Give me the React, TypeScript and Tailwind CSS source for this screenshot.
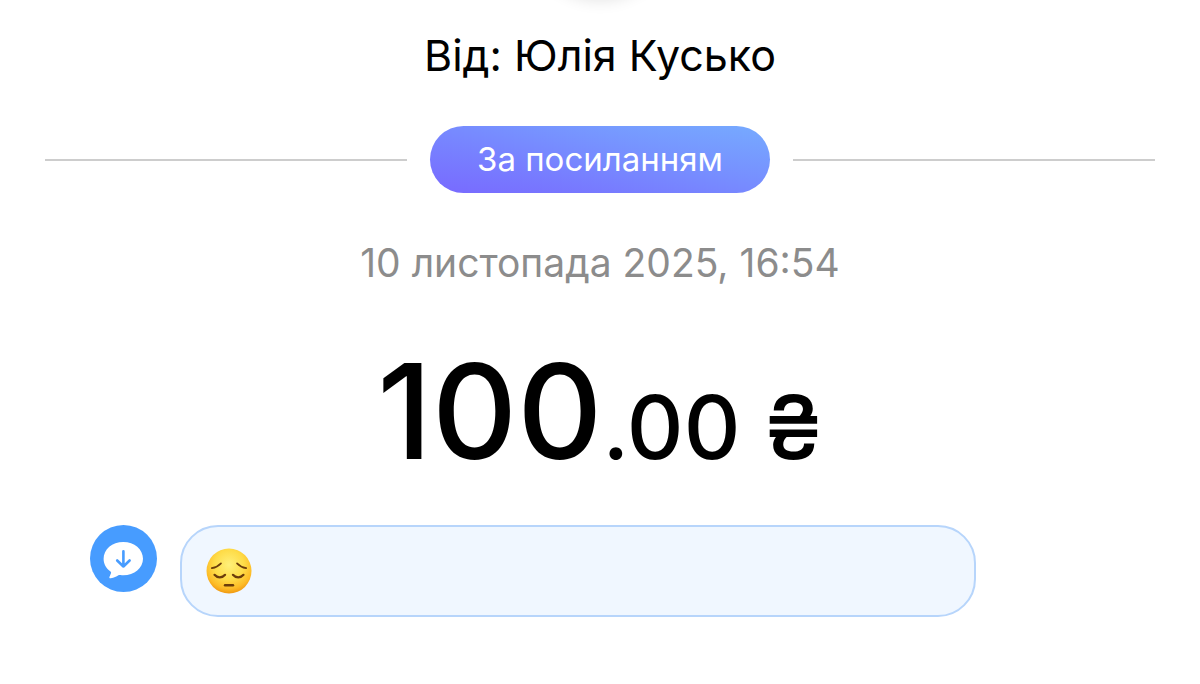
function PensiveFace() {
  return (
    <svg className="h-[46px] w-[46px]" viewBox="0 0 46 46" role="img" aria-label="Pensive face">
      <defs>
        <radialGradient id="face" cx="0.5" cy="0.36" r="0.66">
          <stop offset="0" stopColor="#fff07a" />
          <stop offset="0.5" stopColor="#fedc48" />
          <stop offset="0.8" stopColor="#fdbc27" />
          <stop offset="1" stopColor="#ee930e" />
        </radialGradient>
      </defs>
      <circle cx="23" cy="23" r="22.5" fill="url(#face)" />
      <g fill="none" stroke="#6b3c0b" strokeLinecap="round">
        <path d="M5.8 20.2c3.6-.6 6.8-2.2 9.2-4.8" strokeWidth="1.7" />
        <path d="M40.2 20.2c-3.6-.6-6.8-2.2-9.2-4.8" strokeWidth="1.7" />
        <path d="M8.5 26.8c2.8 3.4 7.8 3.4 10.6 0" strokeWidth="2.2" />
        <path d="M26.9 26.8c2.8 3.4 7.8 3.4 10.6 0" strokeWidth="2.2" />
        <path d="M19 37.2h8" strokeWidth="2.4" />
      </g>
    </svg>
  );
}

function IncomingIcon() {
  return (
    <svg className="h-[67px] w-[67px] shrink-0" viewBox="0 0 67 67" aria-hidden="true">
      <circle cx="33.5" cy="33.5" r="33.5" fill="#479cff" />
      <path
        d="M33.3 17C22.2 17 13.6 24.4 13.6 33.8c0 5.2 2.6 9.6 6.9 12.7.8.6.7 1.3.3 2.2l-1.3 3c-.5 1.2.2 1.9 1.4 1.6 3.2-.6 5.5-1.7 7.5-3 .8-.5 1.4-.4 2.2-.2.9.1 1.8.2 2.7.2C44.4 50.3 53 43 53 33.8 53 24.4 44.4 17 33.3 17z"
        fill="#fff"
      />
      <path
        d="M33.4 26.3v15.2M27.2 35.5l6.2 6 6.2-6"
        fill="none"
        stroke="#479cff"
        strokeWidth="2.6"
        strokeLinecap="round"
        strokeLinejoin="round"
      />
    </svg>
  );
}

export default function App() {
  return (
    <main className="relative min-h-screen overflow-hidden bg-white font-['Inter','Liberation_Sans',sans-serif] text-black">
      {/* Shadow of the avatar above */}
      <div className="absolute -top-36 left-1/2 h-36 w-36 -translate-x-1/2 rounded-full shadow-[0_0_16px_0_rgba(0,0,0,0.12)]" />

      <h1 className="pt-7 text-center text-[43px] leading-[54px]">Від: Юлія Кусько</h1>

      <div className="mt-11 flex items-center gap-[23px] px-[45px]">
        <div className="h-0.5 flex-1 bg-[#cdcdcd]" />
        <div className="rounded-full bg-[linear-gradient(to_top_right,#7869ff,#76abff)] px-[47px] text-[33px] leading-[67px] text-white">
          За посиланням
        </div>
        <div className="h-0.5 flex-1 bg-[#cdcdcd]" />
      </div>

      <p className="mt-11 text-center text-[39px] leading-[52px] text-[#8c8c8c]">
        10 листопада 2025, 16:54
      </p>

      <p className="mt-[42px] text-center text-[132px] leading-[160px] font-medium">
        100<span className="text-[88px]">.00 ₴</span>
      </p>

      <div className="mt-[18px] flex items-start gap-[23px] pr-[224px] pl-[90px]">
        <IncomingIcon />
        <div className="flex h-[92px] flex-1 items-center rounded-[38px] border-2 border-[#b7d5fb] bg-[#f0f7ff] px-6">
          <PensiveFace />
        </div>
      </div>
    </main>
  );
}
